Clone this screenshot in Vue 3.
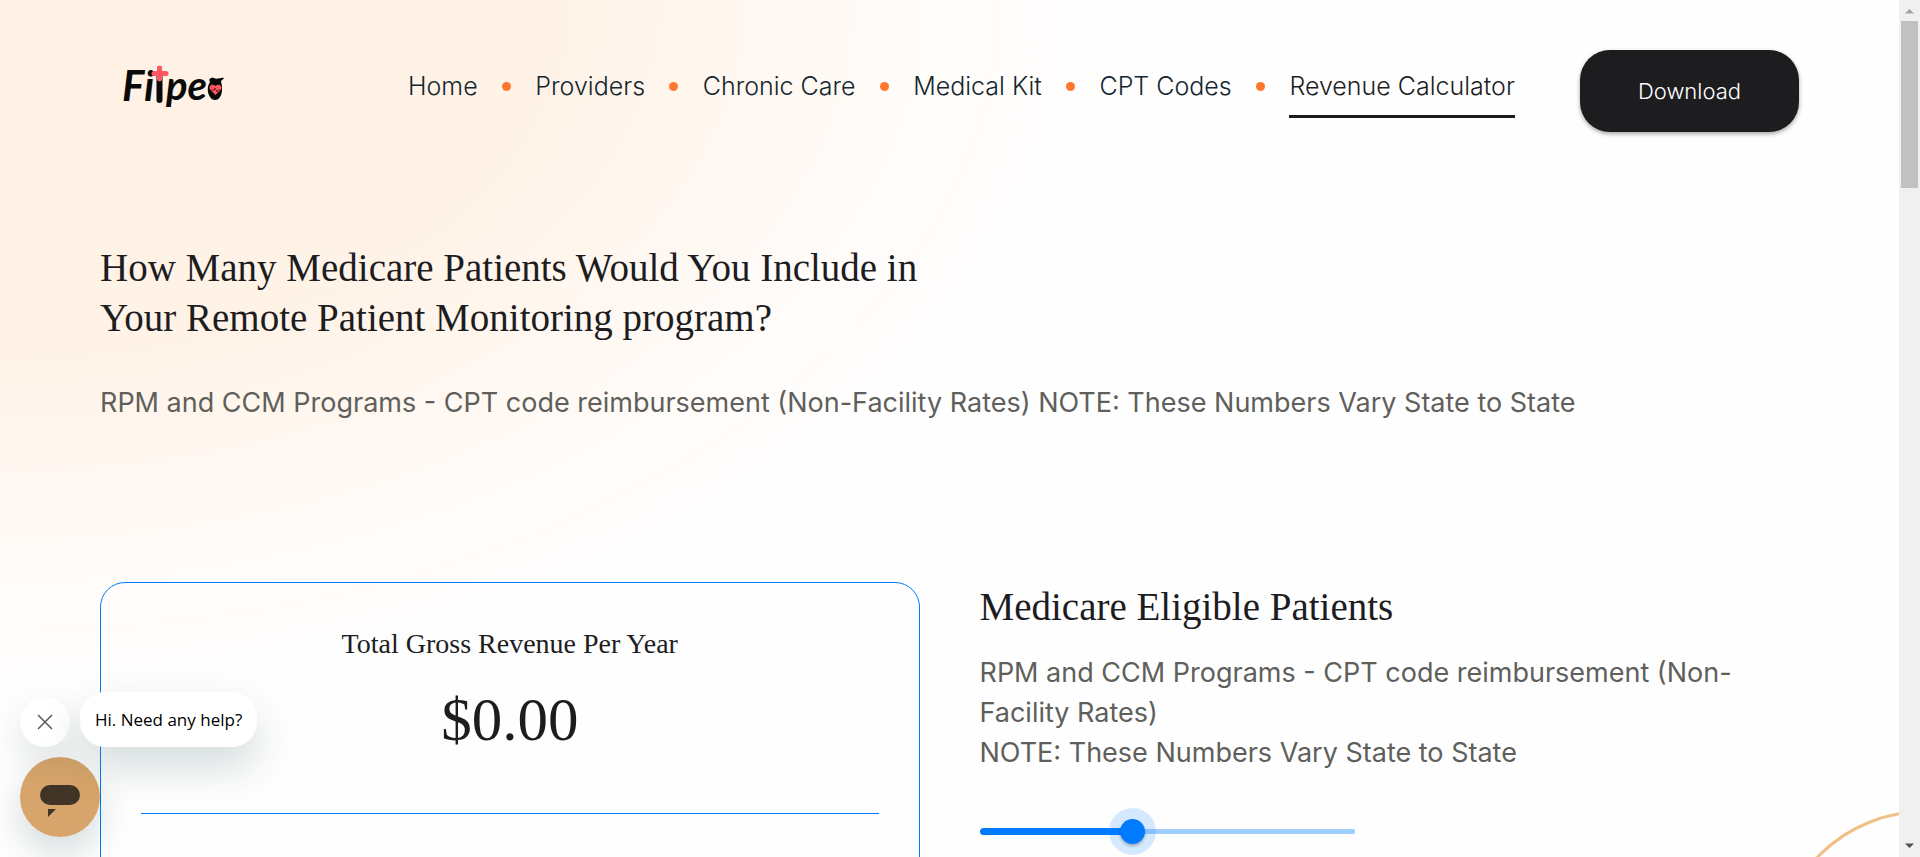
<script setup>
import { ref, computed } from 'vue'

const links = ['Home', 'Providers', 'Chronic Care', 'Medical Kit', 'CPT Codes', 'Revenue Calculator']
const current = 'Revenue Calculator'
const patients = ref(804)
const maxPatients = 2000
const fill = computed(() => `${(patients.value / maxPatients) * 100}%`)
</script>

<template>
  <div class="window">
    <div class="page">
      <header class="header">
        <a href="#" class="logo" aria-label="Fitpeo home">
          <svg width="104" height="56" viewBox="0 0 104 56" role="img" aria-hidden="true">
            <g fill="#0b0a0a" font-family="Lato, sans-serif" font-weight="700" font-style="italic">
              <text x="-1" y="43" font-size="42">Fi</text>
              <text x="43" y="42" font-size="40">pe</text>
            </g>
            <path d="M36.500 19v23" stroke="#0b0a0a" stroke-width="6" stroke-linecap="round" />
            <path d="M36.500 10v11M31 15.500h12" stroke="#ff5660" stroke-width="5" stroke-linecap="round" />
            <path d="M87 24c-2-3 1-5 4-4 3 2 7-1 10 0-1 2-3 2-3 4 2 5 1 13-1 15-2 4-8 4-10 0-3-4-3-11 0-15z" fill="#0b0a0a" />
            <path d="M92.500 37l-5-5c-3-4 2-7 5-4 3-3 8 0 5 4z" fill="#ff5660" />
            <path d="M88 32h3l1-2 2 4 1-2h3" fill="none" stroke="#7c2028" stroke-width="1" />
          </svg>
        </a>
        <nav class="nav" aria-label="Main">
          <template v-for="(link, i) in links" :key="link">
            <span v-if="i" class="dot"></span>
            <a href="#" class="link" :class="{ active: link === current }">{{ link }}</a>
          </template>
        </nav>
        <button type="button" class="download">Download</button>
      </header>

      <main>
        <section class="intro">
          <h1 class="heading">How Many Medicare Patients Would You Include in<br />Your Remote Patient Monitoring program?</h1>
          <p class="copy">RPM and CCM Programs - CPT code reimbursement (Non-Facility Rates) NOTE: These Numbers Vary State to State</p>
        </section>

        <section class="calculator">
          <div class="card">
            <h2 class="card-title">Total Gross Revenue Per Year</h2>
            <p class="amount">$0.00</p>
            <hr class="rule" />
          </div>
          <div class="eligible">
            <h2 class="heading">Medicare Eligible Patients</h2>
            <p class="copy">RPM and CCM Programs - CPT code reimbursement (Non-Facility Rates)<br />NOTE: These Numbers Vary State to State</p>
            <input
              v-model.number="patients"
              class="slider"
              type="range"
              min="0"
              :max="maxPatients"
              aria-label="Medicare Eligible Patients"
              :style="{ '--fill': fill }"
            />
          </div>
        </section>
      </main>
      <span class="ring"></span>
    </div>

    <div class="scrollbar" aria-hidden="true">
      <svg class="arrow" width="11" height="6" viewBox="0 0 11 6"><path d="M1 5.500L5.500 1 10 5.500z" fill="#a3a3a3" /></svg>
      <span class="thumb"></span>
      <svg class="arrow" width="11" height="6" viewBox="0 0 11 6"><path d="M1 .5L5.500 5 10 .5z" fill="#505050" /></svg>
    </div>

    <aside class="chat" aria-label="Chat">
      <div class="chat-row">
        <button type="button" class="close" aria-label="Close message">
          <svg width="16" height="16" viewBox="0 0 16 16"><path d="M1 1l14 14M15 1L1 15" stroke="#555b61" stroke-width="1.500" /></svg>
        </button>
        <p class="message">Hi. Need any help?</p>
      </div>
      <button type="button" class="launcher" aria-label="Open chat">
        <svg width="40" height="32" viewBox="0 0 40 32" fill="#413426"><rect width="40" height="20" rx="10" /><path d="M8 24h8l-8 8z" /></svg>
      </button>
    </aside>
  </div>
</template>

<style>
body {
  overflow: hidden;
}
</style>

<style scoped>
.window {
  position: relative;
  display: flex;
  height: 100vh;
  overflow: hidden;
  background: #fefefe;
  color: #1d1d1f;
  font-family: Inter, "Liberation Sans", sans-serif;
}
.window * {
  box-sizing: border-box;
}
h1, h2, p {
  margin: 0;
  font-weight: 400;
}
button {
  border: 0;
  padding: 0;
  font: inherit;
  cursor: pointer;
}
.page {
  position: relative;
  flex: 1;
  min-width: 0;
  overflow: hidden;
  padding: 50px 100px 0;
  background: radial-gradient(ellipse 1140px 720px at 0 0, #fff1e4 0, #fff2e6 45%, #fff6ee 62%, #fffcfa 82%, #fefefe 100%);
}
.header {
  display: flex;
  align-items: flex-start;
  height: 82px;
}
.logo {
  flex: none;
  width: 308px;
  padding: 8px 0 0 23px;
}
.logo svg {
  display: block;
  overflow: visible;
}
.nav {
  display: flex;
  flex: 1;
  align-items: flex-start;
  justify-content: space-between;
  margin-right: 65px;
}
.link {
  padding: 16px 0 9px;
  border-bottom: 3px solid transparent;
  color: #14262e;
  font-size: 25px;
  font-weight: 300;
  line-height: 40px;
  text-decoration: none;
  white-space: nowrap;
}
.link.active {
  border-color: #1d1d1f;
  color: #1d1d1f;
}
.dot {
  width: 9px;
  height: 9px;
  margin-top: 32px;
  border-radius: 50%;
  background: #ff762e;
}
.download {
  flex: none;
  width: 219px;
  height: 82px;
  border-radius: 30px;
  background: #1d1d1f;
  box-shadow: 0 2px 4px rgba(0, 0, 0, 0.35);
  color: #fff;
  font-size: 22px;
  font-weight: 300;
}
.heading {
  font-family: "Liberation Serif", serif;
  font-size: 39px;
  line-height: 50px;
}
.copy {
  color: #5f5f5b;
  font-size: 27px;
  line-height: 40px;
}
.intro {
  padding-top: 111px;
}
.intro .copy {
  margin-top: 40px;
}
.calculator {
  display: grid;
  grid-template-columns: 1fr 1fr;
  gap: 60px;
  margin-top: 159px;
}
.card {
  height: 600px;
  padding: 40px;
  border: 1px solid #007bff;
  border-radius: 25px;
  text-align: center;
}
.card-title {
  font-family: "Liberation Serif", serif;
  font-size: 28px;
  line-height: 42px;
}
.amount {
  margin-top: 20px;
  font-family: "Liberation Serif", serif;
  font-size: 61px;
  line-height: 70px;
}
.rule {
  margin: 58px 0 0;
  border: 0;
  border-top: 1px solid #007bff;
}
.eligible .copy {
  margin-top: 21px;
}
.slider {
  --fill: 40%;
  display: block;
  width: 375px;
  height: 26px;
  margin: 45px 0 0;
  appearance: none;
  background: none;
}
.slider::-webkit-slider-runnable-track {
  height: 7px;
  border-radius: 4px;
  background:
    linear-gradient(#007bff, #007bff) left / var(--fill) 7px no-repeat,
    linear-gradient(#9ecdff, #9ecdff) center / 100% 5px no-repeat;
}
.slider::-webkit-slider-thumb {
  width: 25px;
  height: 25px;
  margin-top: -9px;
  appearance: none;
  border-radius: 50%;
  background: #007bff;
  box-shadow: 0 0 0 11px rgba(0, 123, 255, 0.16), 0 2px 3px rgba(0, 0, 0, 0.3);
}
.ring {
  position: absolute;
  top: 810px;
  right: -177px;
  width: 302px;
  height: 302px;
  border: 3px solid #efc084;
  border-radius: 50%;
}
.scrollbar {
  display: flex;
  flex: none;
  flex-direction: column;
  align-items: center;
  justify-content: space-between;
  width: 21px;
  padding: 8px 0;
  background: #f0f0f0;
}
.scrollbar .thumb {
  width: 17px;
  height: 167px;
  margin: 7px 0 auto;
  background: #c1c1c1;
}
.arrow {
  flex: none;
}
.chat {
  position: absolute;
  bottom: 20px;
  left: 20px;
}
.chat-row {
  display: flex;
  align-items: flex-end;
  gap: 10px;
  margin-bottom: 10px;
}
.close {
  display: grid;
  place-items: center;
  width: 50px;
  height: 50px;
  border-radius: 50%;
  background: #fff;
  box-shadow: 0 15px 35px rgba(0, 50, 50, 0.13);
}
.message {
  padding: 0 15px;
  border-radius: 25px;
  background: #fff;
  box-shadow: 0 20px 40px rgba(0, 50, 50, 0.17);
  color: #000;
  font-family: "Open Sans", "Noto Sans", sans-serif;
  font-size: 17px;
  line-height: 55px;
}
.launcher {
  display: grid;
  place-items: center;
  width: 80px;
  height: 80px;
  padding-top: 8px;
  border-radius: 50%;
  background: #d7a56b;
  box-shadow: 0 15px 35px rgba(0, 50, 50, 0.17);
}
</style>
